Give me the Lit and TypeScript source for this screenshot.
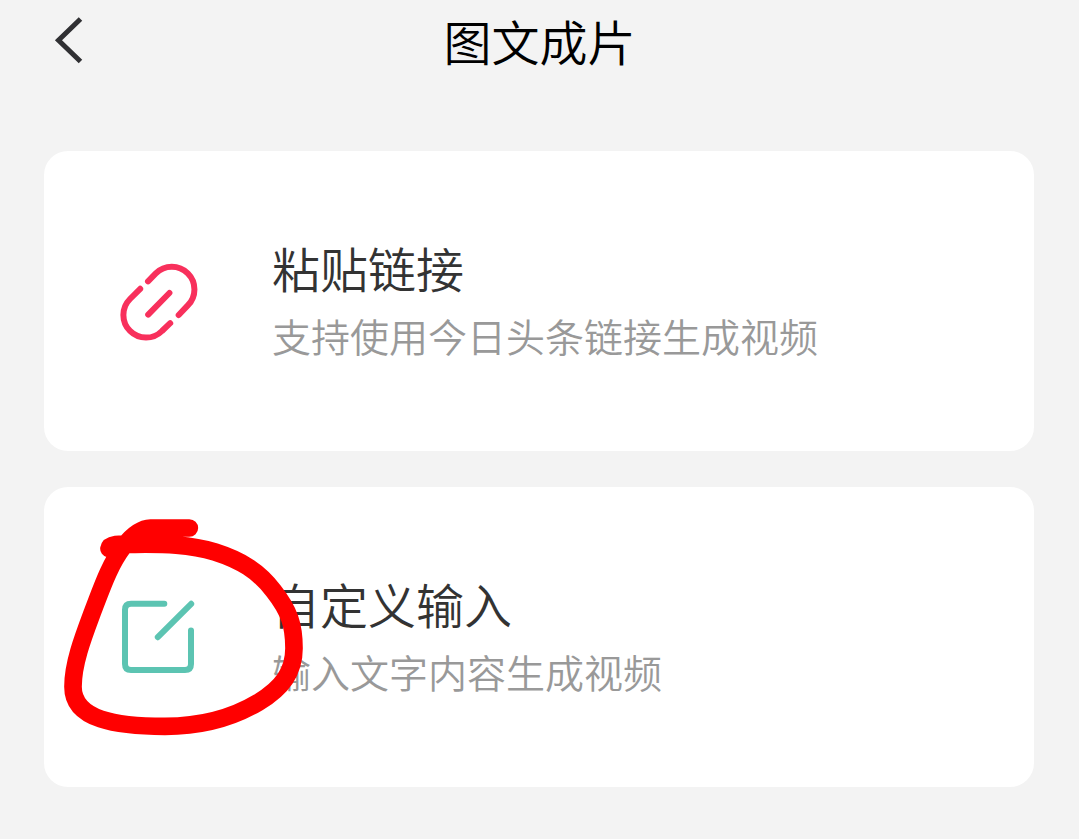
import { LitElement, html, css, svg } from "lit";
import { customElement, property } from "lit/decorators.js";

const linkIcon = svg`
  <svg class="icon link" viewBox="116 259 84 84" aria-hidden="true">
    <path d="M148 281.4 L155.8 273.4 A22.6 22.6 0 0 1 187.8 305.4 L178.7 315" />
    <path d="M140.2 288.8 L130 299 A22.6 22.6 0 0 0 162 331 L170.2 323.2" />
    <path d="M148.2 314.6 L169.4 293" />
  </svg>`;

const editIcon = svg`
  <svg class="icon edit" viewBox="116 595 84 84" aria-hidden="true">
    <path d="M164.3 603.8 H131 Q125 603.8 125 609.8 V664 Q125 670 131 670 H185 Q191 670 191 664 V630.5" />
    <path d="M157.8 637.2 L191.2 603.8" />
  </svg>`;

@customElement("option-card")
export class OptionCard extends LitElement {
  @property() heading = "";
  @property() description = "";
  @property() icon = "link";
  @property({ type: Boolean }) marked = false;

  static styles = css`
    :host {
      display: block;
      position: relative;
    }
    .card {
      display: flex;
      align-items: center;
      gap: 72px;
      box-sizing: border-box;
      width: 100%;
      min-height: 300px;
      padding: 80px 72px;
      border: 0;
      border-radius: 24px;
      background: #ffffff;
      font-family: inherit;
      font-weight: 350;
      text-align: left;
      cursor: pointer;
    }
    .icon {
      flex: none;
      width: 84px;
      height: 84px;
      fill: none;
      stroke-width: 6;
      stroke-linecap: round;
      stroke-linejoin: round;
    }
    .link {
      stroke: #f8305c;
    }
    .edit {
      stroke: #5cc4b2;
    }
    .text {
      display: flex;
      flex-direction: column;
      padding-bottom: 4px;
    }
    .heading {
      font-size: 48px;
      line-height: 72px;
      color: #333333;
    }
    .description {
      font-size: 39px;
      line-height: 64px;
      color: #999999;
    }
    .mark {
      position: absolute;
      left: 6px;
      top: 18px;
      width: 270px;
      height: 245px;
      fill: none;
      stroke: #ff0000;
      stroke-width: 53;
      stroke-linecap: round;
      stroke-linejoin: round;
      pointer-events: none;
    }
  `;

  render() {
    return html`
      <button class="card" type="button">
        ${this.icon === "edit" ? editIcon : linkIcon}
        <span class="text">
          <span class="heading">${this.heading}</span>
          <span class="description">${this.description}</span>
        </span>
      </button>
      ${this.marked
        ? html`<svg class="mark" viewBox="0 0 810 735" aria-hidden="true">
            <path
              d="M418 69 H302 C270 70 245 92 220 125 C178 180 155 250 128 320 C100 395 69 475 69 545 C69 645 200 664 345 664 C450 664 545 640 625 592 C697 549 732 500 732 430 C732 360 718 318 671 258 C625 197 570 165 495 141 C420 118 340 117 255 118 C225 118 180 112 177 131"
            />
          </svg>`
        : null}
    `;
  }
}

@customElement("app-root")
export class AppRoot extends LitElement {
  static styles = css`
    :host {
      display: block;
      box-sizing: border-box;
      min-height: 100vh;
      background: #f3f3f3;
      font-family: "Noto Sans CJK SC", sans-serif;
    }
    .bar {
      display: grid;
      grid-template-columns: 56px 1fr 56px;
      align-items: center;
      padding: 4px 40px 0;
    }
    .back {
      display: flex;
      padding: 0;
      border: 0;
      background: none;
      cursor: pointer;
    }
    .chevron {
      width: 56px;
      height: 72px;
      fill: none;
      stroke: #303033;
      stroke-width: 5;
    }
    .title {
      margin: 0;
      font-size: 48px;
      font-weight: 350;
      line-height: 72px;
      text-align: center;
      color: #000000;
    }
    .options {
      display: flex;
      flex-direction: column;
      gap: 36px;
      padding: 75px 45px 52px 44px;
    }
  `;

  render() {
    return html`
      <header class="bar">
        <button class="back" type="button" aria-label="返回">
          <svg class="chevron" viewBox="40 4 56 72" aria-hidden="true">
            <path d="M80.5 19 L58.5 40.3 L80.5 61.5" />
          </svg>
        </button>
        <h1 class="title">图文成片</h1>
      </header>
      <main class="options">
        <option-card
          icon="link"
          heading="粘贴链接"
          description="支持使用今日头条链接生成视频"
        ></option-card>
        <option-card
          icon="edit"
          heading="自定义输入"
          description="输入文字内容生成视频"
          marked
        ></option-card>
      </main>
    `;
  }
}
